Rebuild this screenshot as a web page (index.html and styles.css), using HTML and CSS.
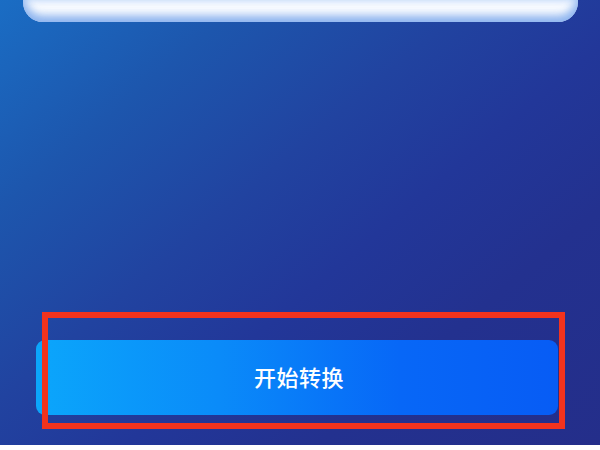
FILE: index.html
```html
<!DOCTYPE html>
<html lang="zh">
<head>
<meta charset="utf-8">
<link rel="stylesheet" href="styles.css">
</head>
<body>
<div class="page">
  <div class="card"></div>
  <div class="footer">
    <button class="btn">开始转换</button>
    <div class="highlight"></div>
  </div>
</div>
<div class="bottom-strip"></div>
</body>
</html>
```
FILE: styles.css
```css
html, body {
  margin: 0;
  padding: 0;
  width: 600px;
  height: 450px;
  overflow: hidden;
  background: #ffffff;
  font-family: "Noto Sans CJK SC", "Noto Sans", sans-serif;
}
.page {
  height: 445px;
  display: flex;
  flex-direction: column;
  padding: 0 22px 0 23px;
  box-sizing: border-box;
  background: linear-gradient(140deg, #1a6dc4 0%, #1d56ad 22%, #2143a0 42%, #223799 58%, #23318f 75%, #242e8a 100%);
}
.card {
  height: 22px;
  border-radius: 0 0 20px 20px;
  background: #fbfdff;
  box-shadow: inset 0 -7px 9px rgba(120, 165, 235, 0.75), inset 5px 0 8px rgba(150, 190, 245, 0.35), inset -5px 0 8px rgba(150, 190, 245, 0.35);
}
.footer {
  margin-top: auto;
  position: relative;
  padding: 0 20px 30px 13px;
}
.btn {
  display: flex;
  align-items: center;
  justify-content: center;
  width: 100%;
  height: 75px;
  border: none;
  border-radius: 9px;
  background: linear-gradient(90deg, #0ba6fb 0%, #0a8bf9 35%, #0767f7 70%, #075cf5 100%);
  color: #ffffff;
  font-family: "Noto Sans CJK SC", "Noto Sans", sans-serif;
  font-size: 22px;
  font-weight: 500;
  letter-spacing: 0.5px;
  padding: 0 0 3px 4px;
}
.highlight {
  position: absolute;
  left: 19px;
  top: -28px;
  width: 523px;
  height: 117px;
  border: 6px solid #f2331d;
  box-sizing: border-box;
}
.bottom-strip {
  height: 5px;
  background: #ffffff;
}
```
